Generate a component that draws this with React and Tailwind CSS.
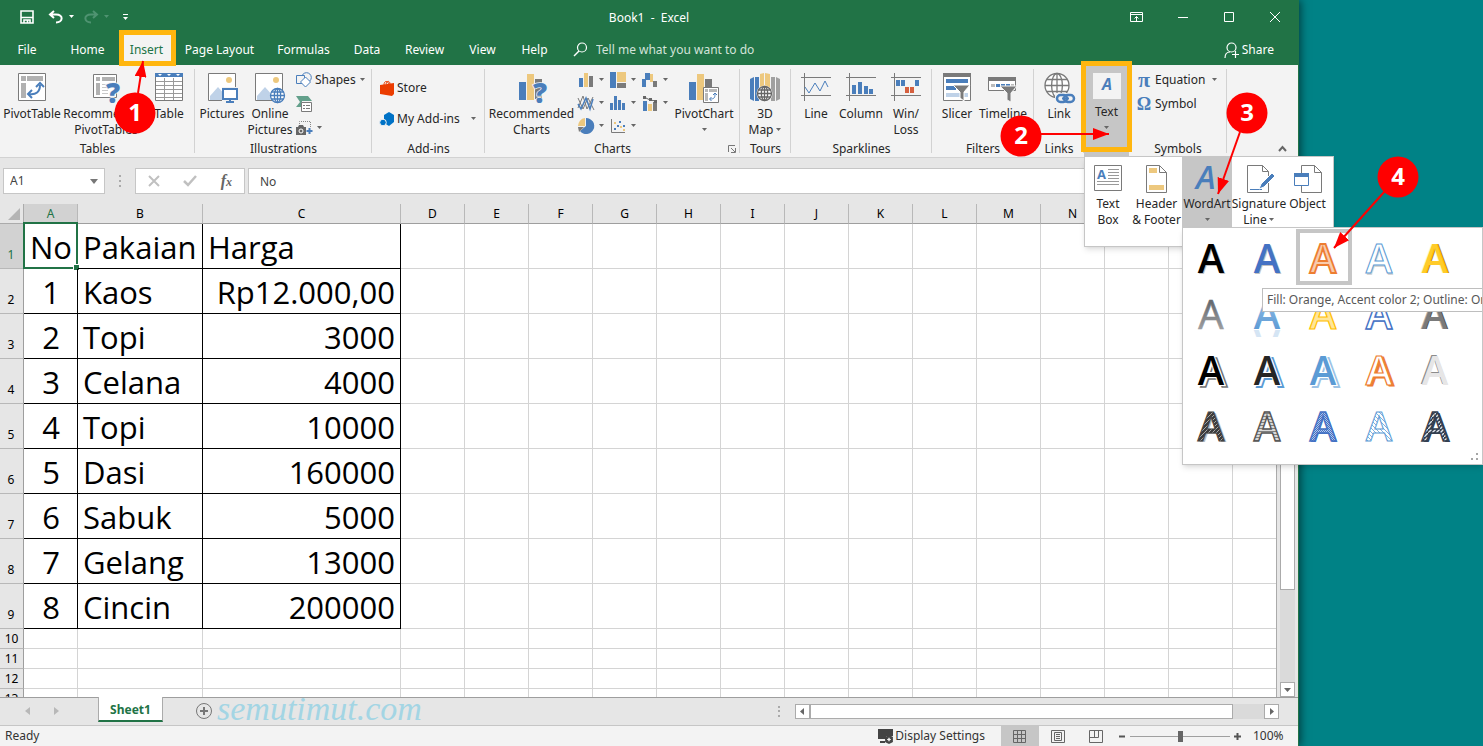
import React, { useState } from "react";

const BLUE = "#4a7ebb";
const TAN = "#edc87e";
const GRAY = "#7a7a7a";

const TABS = [
  { name: "File", width: "w-[54px]" },
  { name: "Home", width: "w-[67px]" },
  { name: "Insert", width: "w-[51px]" },
  { name: "Page Layout", width: "w-[95px]" },
  { name: "Formulas", width: "w-[73px]" },
  { name: "Data", width: "w-[54px]" },
  { name: "Review", width: "w-[61px]" },
  { name: "View", width: "w-[55px]" },
  { name: "Help", width: "w-[49px]" },
];

const ROWS = [
  ["No", "Pakaian", "Harga"],
  ["1", "Kaos", "Rp12.000,00"],
  ["2", "Topi", "3000"],
  ["3", "Celana", "4000"],
  ["4", "Topi", "10000"],
  ["5", "Dasi", "160000"],
  ["6", "Sabuk", "5000"],
  ["7", "Gelang", "13000"],
  ["8", "Cincin", "200000"],
];

const EMPTY_COLUMNS = ["D", "E", "F", "G", "H", "I", "J", "K", "L", "M", "N", "O", "P", "Q"];

function Svg({ w, h, children, className = "" }) {
  return (
    <svg width={w} height={h} viewBox={`0 0 ${w} ${h}`} fill="none" className={`shrink-0 overflow-visible ${className}`} aria-hidden="true">
      {children}
    </svg>
  );
}

function Caret({ className = "text-[#666]" }) {
  return (
    <Svg w={7} h={4} className={className}>
      <path d="M1 0h5L3.500 3z" fill="currentColor" />
    </Svg>
  );
}

/* ---------- ribbon icons ---------- */

function QuestionMark({ x, y }) {
  return (
    <text
      x={x}
      y={y}
      fontSize="28"
      fontWeight="800"
      fill={BLUE}
      stroke="#f3f3f3"
      strokeWidth="1.500"
      paintOrder="stroke"
      fontFamily="Open Sans, sans-serif"
    >
      ?
    </text>
  );
}

function PivotTableIcon() {
  return (
    <Svg w={28} h={28}>
      <path d="M.5.5h27v27H.5z" fill="#fff" stroke={GRAY} />
      <path d="M3 3h5v5H3zM9 3h16v5H9zM3 10h5v15H3z" fill="#b1b1b1" />
      <path d="M11 21c7 1 11-2 11-9" stroke={BLUE} strokeWidth="2" />
      <path d="M18 14l4-4 4 4M14 17l-4 4 4 4" stroke={BLUE} strokeWidth="2" />
    </Svg>
  );
}

function RecommendedPivotIcon() {
  return (
    <Svg w={26} h={32} className="-mb-1">
      <path d="M.5 1.500h23v23H.5z" fill="#fff" stroke={GRAY} />
      <path d="M3 4h4v4H3zM9 4h13v4H9zM3 10h4v12H3z" fill="#b1b1b1" />
      <path d="M9 11.500h9M9 14.500h6M9 17.500h6M9 20.500h6" stroke="#c8c8c8" />
      <QuestionMark x={13} y={30} />
    </Svg>
  );
}

function TableIcon() {
  return (
    <Svg w={28} h={28}>
      <path d="M.5.5h27v27H.5z" fill="#fff" stroke={GRAY} />
      <path d="M1 8.500h26M1 12.500h26M1 16.500h26M1 20.500h26M1 24.500h26M9.500 5v22M18.500 5v22" stroke="#9a9a9a" />
      <path d="M0 0h28v4H0z" fill={BLUE} />
      <path d="M3 1h4L5 3zM12 1h4l-2 2zM21 1h4l-2 2z" fill="#fff" />
    </Svg>
  );
}

function PhotoBase() {
  return (
    <>
      <path d="M.5.5h27v27H.5z" fill="#fff" stroke={GRAY} />
      <circle cx="21" cy="7" r="3" fill={TAN} />
      <path d="M2 27v-4l8-9 8 9v4z" fill="#bfd2e8" />
    </>
  );
}

function PicturesIcon() {
  return (
    <Svg w={28} h={30} className="-mb-[2px]">
      <PhotoBase />
      <path d="M14 14h17v15H14z" fill="#f3f3f3" />
      <path d="M15 16h14v10H15z" fill="#fff" stroke={BLUE} strokeWidth="2" />
      <path d="M21 27h2v2h-2zM18 28h8v2h-8z" fill={BLUE} />
    </Svg>
  );
}

function Globe({ cx, cy, r, color, bg = "#fff" }) {
  return (
    <g stroke={color} strokeWidth="1.300">
      <circle cx={cx} cy={cy} r={r} fill={bg} />
      <ellipse cx={cx} cy={cy} rx={r * 0.45} ry={r} />
      <path d={`M${cx - r} ${cy}h${r * 2}M${cx} ${cy - r}v${r * 2}M${cx - r * 0.87} ${cy - r / 2}h${r * 1.74}M${cx - r * 0.87} ${cy + r / 2}h${r * 1.74}`} />
    </g>
  );
}

function OnlinePicturesIcon() {
  return (
    <Svg w={30} h={30} className="-mb-[2px]">
      <PhotoBase />
      <Globe cx={22.5} cy={22.5} r={7} color={BLUE} />
    </Svg>
  );
}

function ShapesIcon() {
  return (
    <Svg w={16} h={16}>
      <circle cx="10.500" cy="5.500" r="4.800" stroke={BLUE} />
      <path d="M.5 3.500h8v8h-8z" fill="#f3f3f3" stroke={BLUE} />
      <path d="M9.500 5l5 5-5 5-5-5z" fill="#fff" stroke={BLUE} />
    </Svg>
  );
}

function SmartArtIcon() {
  return (
    <Svg w={16} h={16}>
      <path d="M0 0h12l4 5H6v6H0l4-5z" fill="#63a08b" />
      <path d="M5.500 6.500h10v9h-10z" fill="#fff" stroke={GRAY} />
      <path d="M7 9.500h2M10 9.500h4M7 12.500h2M10 12.500h4" stroke={GRAY} />
    </Svg>
  );
}

function ScreenshotIcon() {
  return (
    <Svg w={17} h={16}>
      <path d="M3.500 8V1.500h11V8" stroke="#888" strokeDasharray="1 1" />
      <path d="M0 7h2l1-2h4l1 2h2v8H0z" fill="#666" />
      <circle cx="5" cy="11" r="2" stroke="#fff" />
      <path d="M13.500 8v6M10.500 11h6" stroke={BLUE} strokeWidth="2" />
    </Svg>
  );
}

function StoreIcon() {
  return (
    <Svg w={14} h={16}>
      <path d="M0 5l14-2v11l-2 2-12-2z" fill="#eb3c00" />
      <path d="M4 5c0-5 4-4 5-1M6 4c1-4 4-3 4 0" stroke="#eb3c00" />
    </Svg>
  );
}

function AddinsIcon() {
  return (
    <Svg w={14} h={14}>
      <path d="M4 3l5-3 5 3v7l-5 4-5-3z" fill="#0072c6" />
      <circle cx="3" cy="10.500" r="3.300" fill="#0072c6" stroke="#f3f3f3" />
    </Svg>
  );
}

function RecommendedChartsIcon() {
  return (
    <Svg w={25} h={31} className="-mb-[3px]">
      <path d="M0 9h7v18H0z" fill={BLUE} />
      <path d="M8 1h7v26H8z" fill={TAN} />
      <path d="M16 6h7v20h-7z" fill={GRAY} />
      <QuestionMark x={14} y={30} />
    </Svg>
  );
}

function PivotChartIcon() {
  return (
    <Svg w={31} h={31} className="-mb-[3px]">
      <path d="M0 9h7v18H0z" fill={BLUE} />
      <path d="M8 1h7v26H8z" fill={TAN} />
      <path d="M16 6h7v9h-7z" fill={GRAY} />
      <path d="M14.500 14.500h15v15h-15z" fill="#fff" stroke={GRAY} />
      <path d="M16 16h3v3h-3zM20 16h8v3h-8zM16 20h3v8h-3z" fill="#b8b8b8" />
      <path d="M21 26c4 0 5-1 5-5M24 22l2-2 2 2M22.500 24l-2 2 2 2" stroke={BLUE} />
    </Svg>
  );
}

const CHART_ICONS = [
  {
    name: "Column chart",
    art: (
      <>
        <path d="M1 6h4v9H1z" fill={BLUE} />
        <path d="M6 1h4v14H6z" fill={TAN} />
        <path d="M11 4h4v11h-4z" fill={GRAY} />
      </>
    ),
  },
  {
    name: "Hierarchy chart",
    art: (
      <>
        <path d="M0 0h6v16H0z" fill={BLUE} />
        <path d="M7 0h9v10H7z" fill={TAN} />
        <path d="M7 11h9v5H7z" fill={GRAY} />
      </>
    ),
  },
  {
    name: "Waterfall chart",
    art: (
      <>
        <path d="M0 7h4v8H0z" fill={BLUE} />
        <path d="M3 1h5v7H3z" fill={BLUE} />
        <path d="M8 2h3v8H8z" fill={TAN} />
        <path d="M11 9h4v6h-4z" fill={GRAY} />
      </>
    ),
  },
  {
    name: "Line chart",
    art: (
      <>
        <path d="M0 13L5 1l4 13 6-12M0 3l5 11 5-11 6 12" stroke={GRAY} />
        <path d="M0 9l3 5 5-11 4 11 3-10" stroke={BLUE} strokeWidth="1.500" />
      </>
    ),
  },
  {
    name: "Statistic chart",
    art: <path d="M0 8h3v7H0zM4 1h3v14H4zM8 5h3v10H8zM12 8h3v7h-3z" fill={BLUE} />,
  },
  {
    name: "Combo chart",
    art: (
      <>
        <path d="M1 6h4v10H1z" fill={BLUE} />
        <path d="M6 9h4v7H6z" fill={TAN} />
        <path d="M11 7h4v9h-4z" fill={GRAY} />
        <path d="M2 2l6 3 6 1" stroke="#666" />
        <path d="M1 1h3v3H1zM7 3h3v3H7zM12 5h3v3h-3z" fill="#666" />
      </>
    ),
  },
  {
    name: "Pie chart",
    art: (
      <>
        <path d="M8 0v8L2 13A8 8 0 1 0 8 0z" fill={BLUE} />
        <path d="M7 0v8H0a8 8 0 0 1 7-8z" fill={TAN} />
        <path d="M0 9h6l-5 5z" fill={GRAY} />
      </>
    ),
  },
  {
    name: "Scatter chart",
    art: (
      <>
        <path d="M1.500 1v13.500H15" stroke={GRAY} />
        <path d="M4 10h2v2H4zM7 7h2v2H7zM9 3h2v2H9zM13 7h2v2h-2z" fill={BLUE} />
        <path d="M4 4h2v2H4zM10 8h2v2h-2zM13 11h2v2h-2z" fill={TAN} />
      </>
    ),
  },
];

function MapIcon() {
  return (
    <Svg w={30} h={28}>
      <path d="M0 6l4-2v24l-4-2zM5 4h4v24H5z" fill={BLUE} />
      <path d="M10 1l4-1v20h-4zM15 0l5 1v20h-5z" fill={TAN} />
      <path d="M21 4h4v24h-4zM26 4l4 2v20l-4 2z" fill="#a0a0a0" />
      <circle cx="14.500" cy="20.500" r="8" fill="#f3f3f3" />
      <Globe cx={14.5} cy={20.5} r={7} color="#666" />
    </Svg>
  );
}

function SparkIcon({ children }) {
  return (
    <Svg w={30} h={28}>
      <path d="M3.500 0v28M0 4.500h30M0 22.500h30" stroke={GRAY} />
      {children}
    </Svg>
  );
}

function SlicerIcon() {
  return (
    <Svg w={28} h={30} className="-mb-[2px]">
      <path d="M.5.5h27v27H.5z" fill="#fff" stroke={GRAY} />
      <path d="M0 0h28v4H0z" fill={GRAY} />
      <path d="M3 6h22v4H3zM3 13h10v4H3z" fill={BLUE} />
      <path d="M3 20h22v4H3z" fill="#bfd2e8" />
      <path d="M10 12h17l-6 7v9l-4-3v-6z" fill={GRAY} stroke="#fff" />
    </Svg>
  );
}

function TimelineIcon() {
  return (
    <Svg w={30} h={30} className="-mb-[2px]">
      <path d="M.5 4.500h27v13H.5z" fill="#fff" stroke={GRAY} />
      <path d="M0 4h28v4H0z" fill={GRAY} />
      <path d="M3 11h4v3H3zM23 11h3v3h-3z" fill="#bbb" />
      <path d="M8 11h4v3H8zM13 11h4v3h-4zM18 11h4v3h-4z" fill={BLUE} />
      <path d="M12 13h17l-6 7v9l-4-2v-7z" fill={GRAY} stroke="#f3f3f3" />
    </Svg>
  );
}

function LinkIcon() {
  return (
    <Svg w={30} h={31} className="-mb-[3px]">
      <Globe cx={13} cy={12.5} r={12} color={GRAY} />
      <path d="M11 20h21v11H11z" fill="#f3f3f3" />
      <rect x="13" y="22" width="10" height="7" rx="3.500" stroke={BLUE} strokeWidth="2.500" />
      <rect x="20" y="22" width="10" height="7" rx="3.500" stroke={BLUE} strokeWidth="2.500" />
      <path d="M18 25.500h7" stroke={BLUE} strokeWidth="2" />
    </Svg>
  );
}

/* ---------- ribbon parts ---------- */

function BigButton({ icon, lines, width, caret, caretInline, className = "" }) {
  return (
    <button type="button" className={`flex shrink-0 flex-col items-center pt-2 leading-4 whitespace-nowrap ${width} ${className}`}>
      {icon}
      <span className="mt-[5px] flex flex-col items-center">
        {lines.map((line, i) => (
          <span key={line} className="flex items-center gap-px">
            {line}
            {caretInline && i === lines.length - 1 && <Caret />}
          </span>
        ))}
      </span>
      {caret && <span className="flex h-4 items-center"><Caret /></span>}
    </button>
  );
}

function Group({ label, width, children, last, className = "" }) {
  return (
    <section className={`relative flex shrink-0 flex-col ${width} ${className}`}>
      <div className="flex h-[76px]">{children}</div>
      <h2 className="text-center leading-4">{label}</h2>
      {!last && <span className="absolute top-1 right-0 bottom-1 w-px bg-[#d2d2d2]" />}
    </section>
  );
}

function SmallButton({ icon, label, caret, className = "" }) {
  return (
    <button type="button" aria-label={label ? undefined : "Insert"} className={`flex h-6 items-center gap-[3px] whitespace-nowrap ${className}`}>
      {icon}
      {label}
      {caret && <Caret />}
    </button>
  );
}

function Ribbon() {
  return (
    <div className="relative flex h-[93px] shrink-0 overflow-hidden border-b border-[#d2d2d2] bg-[#f3f3f3] text-[#262626]">
      <Group label="Tables" width="w-[195px]">
        <BigButton icon={<PivotTableIcon />} lines={["PivotTable"]} width="w-16" />
        <BigButton icon={<RecommendedPivotIcon />} lines={["Recommended", "PivotTables"]} width="w-[84px]" />
        <BigButton icon={<TableIcon />} lines={["Table"]} width="w-[42px]" />
      </Group>
      <Group label="Illustrations" width="w-[177px]">
        <BigButton icon={<PicturesIcon />} lines={["Pictures"]} width="w-[54px]" />
        <BigButton icon={<OnlinePicturesIcon />} lines={["Online", "Pictures"]} width="w-[42px]" />
        <div className="flex flex-col pt-[3px] pl-[5px]">
          <SmallButton icon={<ShapesIcon />} label="Shapes" caret />
          <SmallButton icon={<SmartArtIcon />} />
          <SmallButton icon={<ScreenshotIcon />} caret />
        </div>
      </Group>
      <Group label="Add-ins" width="w-[113px]">
        <div className="flex w-full flex-col gap-[7px] px-2 pt-[11px]">
          <SmallButton icon={<StoreIcon />} label="Store" className="gap-1" />
          <div className="flex items-center justify-between">
            <SmallButton icon={<AddinsIcon />} label="My Add-ins" className="gap-1" />
            <Caret />
          </div>
        </div>
      </Group>
      <Group label="Charts" width="w-[255px]">
        <BigButton icon={<RecommendedChartsIcon />} lines={["Recommended", "Charts"]} width="w-[93px]" />
        <div className="grid auto-rows-[23px] grid-cols-3 gap-x-[5px] pt-[3px]">
          {CHART_ICONS.map((c) => (
            <button key={c.name} type="button" aria-label={c.name} className="flex h-[23px] items-center gap-[4px]">
              <Svg w={16} h={16}>{c.art}</Svg>
              <Caret />
            </button>
          ))}
        </div>
        <BigButton icon={<PivotChartIcon />} lines={["PivotChart"]} caret width="w-[70px]" />
        <button type="button" aria-label="Chart options" className="absolute right-1 bottom-1">
          <Svg w={8} h={8}>
            <path d="M.5 7V.5H7M3 3l4 4M7.500 3v4.500H3" stroke="#777" />
          </Svg>
        </button>
      </Group>
      <Group label="Tours" width="w-[51px]">
        <BigButton icon={<MapIcon />} lines={["3D", "Map"]} caretInline width="w-[50px]" />
      </Group>
      <Group label="Sparklines" width="w-[141px]">
        <BigButton
          icon={<SparkIcon><path d="M4 14l4 6 6-10 5 8 5-10 3 6" stroke={BLUE} /></SparkIcon>}
          lines={["Line"]}
          width="w-[50px]"
        />
        <BigButton
          icon={<SparkIcon><path d="M6 12h4v9H6zM12 9h4v12h-4zM18 13h4v8h-4zM23 16h4v5h-4z" fill={BLUE} /></SparkIcon>}
          lines={["Column"]}
          width="w-[40px]"
        />
        <BigButton
          icon={
            <SparkIcon>
              <path d="M5 7h4v6H5zM10 7h4v6h-4zM24 7h4v6h-4z" fill={BLUE} />
              <path d="M14 14h4v6h-4zM19 14h4v6h-4z" fill="#d6603f" />
            </SparkIcon>
          }
          lines={["Win/", "Loss"]}
          width="w-[50px]"
        />
      </Group>
      <Group label="Filters" width="w-[102px]">
        <BigButton icon={<SlicerIcon />} lines={["Slicer"]} width="w-[50px]" />
        <BigButton icon={<TimelineIcon />} lines={["Timeline"]} width="w-[42px]" />
      </Group>
      <Group label="Links" width="w-[50px]">
        <BigButton icon={<LinkIcon />} lines={["Link"]} width="w-[50px]" />
      </Group>
      <Group label="" width="w-[45px]" last className="bg-[#c6c6c6]">
        <BigButton
          icon={
            <Svg w={28} h={26} className="bg-[#f3f3f3]">
              <text x="9" y="17" fontSize="16" fontWeight="700" fontStyle="italic" fill={BLUE} fontFamily="Open Sans, sans-serif">A</text>
            </Svg>
          }
          lines={["Text"]}
          caret
          width="w-[45px]"
        />
      </Group>
      <Group label="Symbols" width="w-[98px]">
        <div className="flex w-full flex-col pt-[3px] pr-[9px] pl-[7px]">
          <div className="flex items-center justify-between">
            <SmallButton icon={<span className="w-4 font-['Liberation_Serif',serif] text-[22px] leading-5 font-bold text-[#4a7ebb]">π</span>} label="Equation" />
            <Caret />
          </div>
          <SmallButton icon={<span className="w-4 font-['Liberation_Serif',serif] text-[18px] leading-5 font-bold text-[#4a7ebb]">Ω</span>} label="Symbol" />
        </div>
      </Group>
      <button type="button" aria-label="Collapse the ribbon" className="absolute right-[11px] bottom-1">
        <Svg w={9} h={8}>
          <path d="M1 6l3.500-4L8 6" stroke="#666" strokeWidth="2" />
        </Svg>
      </button>
    </div>
  );
}

/* ---------- window chrome ---------- */

function TitleBar() {
  return (
    <header className="relative flex h-[34px] shrink-0 items-center bg-[#217346] pr-4 pl-5 text-white">
      <div className="flex items-center">
        <button type="button" aria-label="Save">
          <Svg w={14} h={14}>
            <path d="M1 1h12v12H1zM1 7.500h12M4 13v-3h6v3M7.500 10v3" stroke="#fff" strokeWidth="1.600" />
          </Svg>
        </button>
        <button type="button" aria-label="Undo" className="ml-[14px] flex items-center gap-1">
          <Svg w={16} h={14}>
            <path d="M6 1L2 4.500 6 8M2 4.500h6c8 0 7 8 0 8" stroke="#fff" strokeWidth="2" />
          </Svg>
          <Caret className="text-white" />
        </button>
        <button type="button" aria-label="Redo" disabled className="ml-2 flex items-center gap-1 text-[#4f9371]">
          <Svg w={16} h={14}>
            <path d="M10 1l4 3.500L10 8M14 4.500H8c-8 0-7 8 0 8" stroke="currentColor" strokeWidth="2" />
          </Svg>
          <Caret className="text-[#4f9371]" />
        </button>
        <button type="button" aria-label="Customize toolbar" className="ml-3">
          <Svg w={7} h={8}>
            <path d="M1 1.500h5" stroke="#fff" />
            <path d="M1 4h5L3.500 7z" fill="#fff" />
          </Svg>
        </button>
      </div>
      <h1 className="absolute inset-x-0 top-[10px] text-center leading-4 whitespace-pre">Book1  -  Excel</h1>
      <div className="relative ml-auto flex items-center">
        <button type="button" aria-label="Ribbon display options" className="mr-[35px]">
          <Svg w={13} h={10}>
            <path d="M.5.5h12v9H.5zM.5 2.500h12M6.500 9V4.500M4.500 6.500l2-2 2 2" stroke="#fff" />
          </Svg>
        </button>
        <button type="button" aria-label="Minimize" className="mr-9">
          <Svg w={10} h={10}><path d="M0 5.500h10" stroke="#fff" /></Svg>
        </button>
        <button type="button" aria-label="Maximize" className="mr-9">
          <Svg w={10} h={10}><path d="M.5.5h9v9h-9z" stroke="#fff" /></Svg>
        </button>
        <button type="button" aria-label="Close" className="mr-[2px]">
          <Svg w={10} h={10}><path d="M0 0l10 10M10 0L0 10" stroke="#fff" /></Svg>
        </button>
      </div>
    </header>
  );
}

function TabStrip({ active, onSelect }) {
  return (
    <nav className="flex h-[31px] shrink-0 items-stretch bg-[#217346] text-white">
      {TABS.map((tab) => (
        <button
          key={tab.name}
          type="button"
          onClick={() => onSelect(tab.name)}
          className={`shrink-0 whitespace-nowrap ${tab.width} ${active === tab.name ? "bg-[#f3f3f3] text-[#217346]" : ""}`}
        >
          {tab.name}
        </button>
      ))}
      <label className="ml-[14px] flex items-center gap-2 text-[#d3e3da]">
        <Svg w={15} h={15}>
          <circle cx="9" cy="5.500" r="4.500" stroke="#fff" strokeWidth="1.200" />
          <path d="M6 9l-5 5" stroke="#fff" strokeWidth="1.500" />
        </Svg>
        <input className="w-[170px] bg-transparent outline-none placeholder:text-[#d3e3da]" placeholder="Tell me what you want to do" />
      </label>
      <button type="button" className="mr-6 ml-auto flex items-center gap-[2px]">
        <Svg w={16} h={16}>
          <circle cx="7.500" cy="5.500" r="4.500" stroke="#fff" strokeWidth="1.200" />
          <path d="M1 16c0-4 2-6 5-6M8 12.500h7M11.500 9v7" stroke="#fff" strokeWidth="1.200" />
        </Svg>
        Share
      </button>
    </nav>
  );
}

function FormulaBar() {
  return (
    <div className="flex h-[46px] shrink-0 items-center bg-[#e6e6e6] pr-1 pl-[3px] text-[#444]">
      <div className="flex h-[26px] w-[102px] items-center border border-[#c6c6c6] bg-white px-[6px]">
        <input aria-label="Name box" defaultValue="A1" className="w-0 flex-1 bg-transparent outline-none" />
        <Svg w={8} h={5}><path d="M0 0h8L4 5z" fill="#777" /></Svg>
      </div>
      <Svg w={2} h={12} className="mx-[14px]">
        <path d="M0 0h2v2H0zM0 5h2v2H0zM0 10h2v2H0z" fill="#aaa" />
      </Svg>
      <div className="flex h-[26px] w-[110px] items-center justify-between border border-[#c6c6c6] bg-white px-3">
        <button type="button" aria-label="Cancel">
          <Svg w={12} h={12}><path d="M1 1l10 10M11 1L1 11" stroke="#c0c0c0" strokeWidth="2" /></Svg>
        </button>
        <button type="button" aria-label="Enter">
          <Svg w={14} h={12}><path d="M1 6l4 4 8-9" stroke="#c0c0c0" strokeWidth="2.500" /></Svg>
        </button>
        <button type="button" aria-label="Insert function" className="font-['Liberation_Serif',serif] text-base leading-4 font-bold text-[#666] italic">
          f<span className="text-xs">x</span>
        </button>
      </div>
      <input aria-label="Formula" defaultValue="No" className="ml-[3px] h-[26px] min-w-0 flex-1 border border-[#c6c6c6] bg-white px-[11px] outline-none" />
    </div>
  );
}

function Sheet() {
  return (
    <div className="min-w-0 flex-1 overflow-hidden border-r border-[#ababab] bg-white">
      <table className="w-full table-fixed border-separate border-spacing-0 text-black">
        <colgroup>
          <col className="w-6" />
          <col className="w-[54px]" />
          <col className="w-[125px]" />
          <col className="w-[198px]" />
          {EMPTY_COLUMNS.map((c) => (
            <col key={c} className="w-16" />
          ))}
        </colgroup>
        <thead>
          <tr className="h-5 bg-[#e6e6e6]">
            <th className="border-r border-b border-[#ababab] p-0">
              <Svg w={12} h={12} className="ml-2"><path d="M12 0v12H0z" fill="#b4b4b4" /></Svg>
            </th>
            {["A", "B", "C", ...EMPTY_COLUMNS].map((c) => (
              <th
                key={c}
                scope="col"
                className={`border-r border-b border-r-[#b8b8b8] border-b-[#9e9e9e] p-0 leading-4 font-normal ${c === "A" ? "bg-[#d2d2d2] text-[#217346]" : ""}`}
              >
                {c}
              </th>
            ))}
          </tr>
        </thead>
        <tbody>
          {ROWS.map((row, i) => (
            <tr key={i} className="h-[45px]">
              <th
                scope="row"
                className={`border-r border-b border-r-[#9e9e9e] border-b-[#b8b8b8] p-0 pr-px pb-[5px] align-bottom leading-4 font-normal ${i === 0 ? "bg-[#d2d2d2] text-[#217346]" : "bg-[#e6e6e6]"}`}
              >
                {i + 1}
              </th>
              {row.map((value, col) => (
                <td
                  key={col}
                  className={`relative border-r border-b border-black p-0 pt-[2px] font-['Open_Sans',sans-serif] text-[31px] leading-[42px] ${
                    col === 0 ? "pl-px text-center" : col === 2 && i > 0 ? "pr-[5px] text-right" : "pl-[5px] text-left"
                  }`}
                >
                  {value}
                  {i === 0 && col === 0 && (
                    <span className="absolute -inset-x-px -top-[2px] -bottom-px border-2 border-[#217346]">
                      <span className="absolute -right-[3px] -bottom-[3px] h-[6px] w-[6px] border-t border-l border-white bg-[#217346]" />
                    </span>
                  )}
                </td>
              ))}
              {EMPTY_COLUMNS.map((c) => (
                <td key={c} className="border-r border-b border-[#d4d4d4] p-0" />
              ))}
            </tr>
          ))}
          {[10, 11, 12, 13].map((n) => (
            <tr key={n} className="h-5">
              <th scope="row" className="border-r border-b border-r-[#9e9e9e] border-b-[#b8b8b8] bg-[#e6e6e6] p-0 leading-4 font-normal">{n}</th>
              {["A", "B", "C", ...EMPTY_COLUMNS].map((c) => (
                <td key={c} className="border-r border-b border-[#d4d4d4] p-0" />
              ))}
            </tr>
          ))}
        </tbody>
      </table>
    </div>
  );
}

function ScrollButton({ label, d }) {
  return (
    <button type="button" aria-label={label} className="flex h-[15px] w-[15px] shrink-0 items-center justify-center border border-[#ababab] bg-white">
      <Svg w={7} h={7}><path d={d} fill="#666" /></Svg>
    </button>
  );
}

function SheetTabs() {
  return (
    <div className="flex h-[28px] shrink-0 items-start border-t border-[#9e9e9e] bg-[#e6e6e6] pr-[19px]">
      <div className="flex h-[26px] w-[98px] items-center gap-6 pl-[25px]">
        <Svg w={5} h={8}><path d="M5 0v8L0 4z" fill="#b8b8b8" /></Svg>
        <Svg w={5} h={8}><path d="M0 0v8l5-4z" fill="#b8b8b8" /></Svg>
      </div>
      <button type="button" className="-mt-px h-[25px] w-[65px] border-x border-b-2 border-x-[#ababab] border-b-[#217346] bg-white pt-[2px] font-bold text-[#217346]">
        Sheet1
      </button>
      <button type="button" aria-label="New sheet" className="mt-1 ml-8">
        <Svg w={18} h={18}>
          <circle cx="9" cy="9" r="7.500" stroke="#777" />
          <path d="M9 5v8M5 9h8" stroke="#777" strokeWidth="2" />
        </Svg>
      </button>
      <span className="-mt-1 ml-1 font-['Liberation_Serif',serif] text-[34px] leading-[30px] text-[#a3d5e4] italic">semutimut.com</span>
      <div className="mt-[6px] ml-auto flex items-center">
        <Svg w={2} h={11} className="mr-[15px]">
          <path d="M0 0h2v2H0zM0 4h2v2H0zM0 9h2v2H0z" fill="#aaa" />
        </Svg>
        <ScrollButton label="Scroll left" d="M5 0v7L1 3.500z" />
        <div className="flex h-[15px] w-[454px] bg-[#dadada]">
          <div className="w-[423px] border border-[#ababab] bg-white" />
        </div>
        <ScrollButton label="Scroll right" d="M2 0v7l4-3.500z" />
      </div>
    </div>
  );
}

function StatusBar() {
  return (
    <footer className="flex h-[21px] shrink-0 items-center border-t border-[#c6c6c6] bg-[#f3f3f3] pl-[5px] text-[#333]">
      <span>Ready</span>
      <button type="button" className="mr-4 ml-auto flex items-center gap-px">
        <Svg w={16} h={15}>
          <path d="M0 0h15v7H8v3H0zM2 12h5v2H2z" fill="#444" />
          <circle cx="11" cy="10.500" r="3" stroke="#444" strokeWidth="2" />
          <path d="M11 6v9M7 8l8 5M15 8l-8 5" stroke="#444" />
          <circle cx="11" cy="10.500" r="1.200" fill="#f3f3f3" />
        </Svg>
        Display Settings
      </button>
      <button type="button" aria-label="Normal view" className="flex h-full w-[38px] items-center justify-center bg-[#c6c6c6]">
        <Svg w={14} h={13}><path d="M.5.5h12v12H.5zM.5 4.500h12M.5 8.500h12M4.500.5v12M8.500.5v12" stroke="#666" /></Svg>
      </button>
      <button type="button" aria-label="Page layout view" className="ml-3">
        <Svg w={14} h={13}><path d="M.5.5h13v12H.5zM3.500 2.500h7v8h-7zM5 4.500h4M5 6.500h4M5 8.500h4" stroke="#666" /></Svg>
      </button>
      <button type="button" aria-label="Page break view" className="ml-6">
        <Svg w={14} h={13}><path d="M.5.5h13v12H.5zM5.500.5v7M9.500.5v7M.5 7.500h9" stroke="#666" /></Svg>
      </button>
      <button type="button" aria-label="Zoom out" className="ml-4">
        <Svg w={7} h={7}><path d="M0 3.500h6" stroke="#555" strokeWidth="2" /></Svg>
      </button>
      <input
        type="range"
        aria-label="Zoom"
        defaultValue="50"
        className="mx-1 h-3 w-[100px] appearance-none bg-transparent [&::-webkit-slider-runnable-track]:h-px [&::-webkit-slider-runnable-track]:bg-[#a0a0a0] [&::-webkit-slider-thumb]:-mt-[5px] [&::-webkit-slider-thumb]:h-[11px] [&::-webkit-slider-thumb]:w-[5px] [&::-webkit-slider-thumb]:appearance-none [&::-webkit-slider-thumb]:bg-[#666]"
      />
      <button type="button" aria-label="Zoom in">
        <Svg w={7} h={7}><path d="M0 3.500h7M3.500 0v7" stroke="#555" strokeWidth="2" /></Svg>
      </button>
      <span className="mr-4 ml-3 w-[29px]">100%</span>
    </footer>
  );
}

/* ---------- drop-down panels ---------- */

function TextMenu() {
  return (
    <div className="absolute top-[156px] left-[1084px] flex h-[91px] w-[250px] border border-[#c6c6c6] bg-white text-[#262626] shadow-md">
      <BigButton
        icon={
          <Svg w={28} h={26}>
            <path d="M.5.5h27v25H.5z" fill="#fff" stroke={GRAY} />
            <text x="3" y="14" fontSize="13" fontWeight="700" fill={BLUE} fontFamily="Open Sans, sans-serif">A</text>
            <path d="M14 4.500h11M14 7.500h11M14 10.500h11M14 13.500h11M3 16.500h22M3 19.500h22" stroke="#999" />
          </Svg>
        }
        lines={["Text", "Box"]}
        width="w-[46px]"
      />
      <BigButton
        icon={
          <Svg w={21} h={28} className="-mb-[2px]">
            <path d="M.5.5h13l7 7v20H.5z" fill="#fff" stroke={GRAY} />
            <path d="M3 3h8v5H3zM3 20h15v5H3z" fill={TAN} />
            <path d="M13.500.5v7h7" stroke={GRAY} />
          </Svg>
        }
        lines={["Header", "& Footer"]}
        width="w-[51px]"
      />
      <BigButton
        icon={
          <Svg w={28} h={26}>
            <text x="3" y="24" fontSize="33" fontWeight="600" fontStyle="italic" fill={BLUE} fontFamily="Open Sans, sans-serif">A</text>
          </Svg>
        }
        lines={["WordArt"]}
        caret
        width="w-[50px]"
        className="bg-[#c6c6c6]"
      />
      <BigButton
        icon={
          <Svg w={24} h={28} className="-mb-[2px]">
            <path d="M.5.5h15l6 6v21H.5z" fill="#fff" stroke={GRAY} />
            <path d="M15.500.5v6h6" stroke={GRAY} />
            <path d="M3 24.500h12" stroke={BLUE} />
            <path d="M12 24l2-5L25 8l3 3-11 11z" fill={BLUE} stroke="#fff" />
          </Svg>
        }
        lines={["Signature", "Line"]}
        caretInline
        width="w-[54px]"
      />
      <BigButton
        icon={
          <Svg w={28} h={28} className="-mb-[2px]">
            <path d="M7.500.5h13l7 7v20h-20z" fill="#fff" stroke={GRAY} />
            <path d="M20.500.5v7h7" stroke={GRAY} />
            <path d="M.5 8.500h14v12H.5z" fill="#fff" stroke={BLUE} />
            <path d="M0 8h15v4H0z" fill={BLUE} />
          </Svg>
        }
        lines={["Object"]}
        width="w-[43px]"
      />
    </div>
  );
}

// Each entry is a stack of letters, painted back to front.
const WORDART = [
  [{ fill: "#999", dx: 1, dy: 1, opacity: 0.6 }, { fill: "#000" }],
  [{ fill: "#999", dx: 1, dy: 1, opacity: 0.6 }, { fill: "#4472c4" }],
  [{ fill: "#f8cbad", stroke: "#ed7d31", sw: 1.8 }],
  [{ fill: "#bbb", dx: 1, dy: 2, opacity: 0.6 }, { fill: "#fff", stroke: "#5b9bd5", sw: 1 }],
  [{ fill: "#a88400", dx: 1, dy: 0 }, { fill: "#ffc000" }, { fill: "#ffe27a", dx: -1, dy: 0, opacity: 0.35 }],
  [{ fill: "url(#fadeGray)", weight: 400, stroke: "url(#fadeGray)", sw: 0.6 }],
  [{ fill: "#5b9bd5", mirror: true, opacity: 0.25 }, { fill: "url(#fadeBlue)" }],
  [{ fill: "#ffe699", stroke: "#ffc000", sw: 1.2 }],
  [{ fill: "#aac0e8", dx: 1, dy: 1 }, { fill: "#fff", stroke: "#4472c4", sw: 1.4 }],
  [{ fill: "#555" }, { fill: "#8a8a8a", dx: -1, dy: 0, opacity: 0.7 }],
  [{ fill: "#fff", stroke: "#777", sw: 1.6, dx: 3, dy: 2 }, { fill: "#000", stroke: "#fff", sw: 2, behind: true }],
  [{ fill: "#fff", stroke: "#5b9bd5", sw: 1.8, dx: 3, dy: 2 }, { fill: "#262626", stroke: "#fff", sw: 2, behind: true }],
  [{ fill: "#fff", stroke: "#9dc3e6", sw: 1.8, dx: 3, dy: 2 }, { fill: "#5b9bd5", stroke: "#fff", sw: 2, behind: true }],
  [{ fill: "#ed7d31", stroke: "#ed7d31", sw: 1, dx: 2, dy: 1 }, { fill: "#fff", stroke: "#ed7d31", sw: 1.2 }],
  [{ fill: "#8c8c8c", dx: -1, dy: -1 }, { fill: "#e7e6e6" }],
  [{ fill: "#bbb", dx: 2, dy: 1 }, { fill: "url(#darkStripes)", stroke: "#444", sw: 1.2 }],
  [{ fill: "url(#grayLines)", stroke: "#555", sw: 1.4 }],
  [{ fill: "#4472c4", dx: 1, dy: 1 }, { fill: "url(#blueDots)", stroke: "#4472c4", sw: 1.4 }],
  [{ fill: "url(#lightStripes)", stroke: "#5b9bd5", sw: 1 }],
  [{ fill: "#333f50", dx: 2, dy: 1 }, { fill: "url(#navyStripes)", stroke: "#333f50", sw: 1.4 }],
];

function WordArtDefs() {
  return (
    <svg width="0" height="0" className="absolute" aria-hidden="true">
      <defs>
        <linearGradient id="fadeGray" x1="0" y1="0" x2="0" y2="1">
          <stop offset="0.300" stopColor="#666a70" />
          <stop offset="1" stopColor="#b5b5b5" />
        </linearGradient>
        <linearGradient id="fadeBlue" x1="0" y1="0" x2="0" y2="1">
          <stop offset="0.300" stopColor="#8bb8e2" />
          <stop offset="1" stopColor="#4a8fd0" />
        </linearGradient>
        <pattern id="darkStripes" width="4" height="4" patternUnits="userSpaceOnUse">
          <path d="M0 0h4v4H0z" fill="#3c3c3c" />
          <path d="M-1 5L5-1" stroke="#a8a8a8" />
        </pattern>
        <pattern id="grayLines" width="4" height="3" patternUnits="userSpaceOnUse">
          <path d="M0 0h4v3H0z" fill="#d9d9d9" />
          <path d="M0 .5h4" stroke="#7f7f7f" />
        </pattern>
        <pattern id="blueDots" width="2" height="2" patternUnits="userSpaceOnUse">
          <path d="M0 0h2v2H0z" fill="#4472c4" />
          <path d="M0 0h1v1H0zM1 1h1v1H1z" fill="#b4c7ea" />
        </pattern>
        <pattern id="lightStripes" width="4" height="4" patternUnits="userSpaceOnUse">
          <path d="M0 0h4v4H0z" fill="#fff" />
          <path d="M-1-1l6 6" stroke="#7fb2e0" />
        </pattern>
        <pattern id="navyStripes" width="4" height="4" patternUnits="userSpaceOnUse">
          <path d="M0 0h4v4H0z" fill="#333f50" />
          <path d="M-1 5L5-1" stroke="#dfe5ee" strokeWidth="1.400" />
        </pattern>
      </defs>
    </svg>
  );
}

function WordArtLetter({ layers }) {
  return (
    <svg width="48" height="48" viewBox="0 0 48 48" aria-hidden="true">
      {layers.map((l, i) => (
        <text
          key={i}
          x={23 + (l.dx || 0)}
          y={40 + (l.dy || 0)}
          textAnchor="middle"
          fontFamily="Open Sans, sans-serif"
          fontSize="40"
          fontWeight={l.weight || 600}
          fill={l.fill}
          stroke={l.stroke}
          strokeWidth={l.sw}
          opacity={l.opacity}
          paintOrder={l.behind ? "stroke" : undefined}
          transform={l.mirror ? "translate(0 81) scale(1 -1)" : undefined}
        >
          A
        </text>
      ))}
    </svg>
  );
}

function WordArtGallery() {
  const [selected, setSelected] = useState(2);
  return (
    <div className="absolute top-[227px] left-[1182px] h-[238px] w-[301px] border border-[#c6c6c6] bg-white pt-px pl-px shadow-md">
      <WordArtDefs />
      <div className="grid w-[280px] grid-cols-5">
        {WORDART.map((layers, i) => (
          <button
            key={i}
            type="button"
            aria-label={`WordArt style ${i + 1}`}
            onClick={() => setSelected(i)}
            className={`flex h-14 w-14 items-center justify-center border-4 ${selected === i ? "border-[#c6c6c6]" : "border-transparent"}`}
          >
            <WordArtLetter layers={layers} />
          </button>
        ))}
      </div>
      <Svg w={7} h={7} className="absolute right-1 bottom-1">
        <path d="M5 0h2v2H5zM5 5h2v2H5zM0 5h2v2H0z" fill="#a6a6a6" />
      </Svg>
      <div role="tooltip" className="absolute top-[60px] right-0 left-[79px] h-6 overflow-hidden border border-r-0 border-[#bebebe] bg-white pl-1 leading-[22px] whitespace-nowrap text-[#575757]">
        Fill: Orange, Accent color 2; Outline: Orange
      </div>
    </div>
  );
}

const STEPS = [
  { n: 1, x: 135, y: 113, from: [138, 93], to: [143, 61] },
  { n: 2, x: 1021, y: 136, from: [1041, 134], to: [1109, 134] },
  { n: 3, x: 1247, y: 113, from: [1240, 132], to: [1218, 194] },
  { n: 4, x: 1398, y: 177, from: [1385, 191], to: [1334, 248] },
];

function Callouts() {
  return (
    <svg width="1483" height="746" className="pointer-events-none absolute top-0 left-0" aria-hidden="true">
      <defs>
        <marker id="tip" markerWidth="16" markerHeight="12" refX="16" refY="6" orient="auto" markerUnits="userSpaceOnUse">
          <path d="M0 0l16 6-16 6z" fill="#f00" />
        </marker>
      </defs>
      <g fill="none" stroke="#ffb60f" strokeWidth="5">
        <rect x="121.500" y="32.500" width="52" height="31" />
        <rect x="1083.500" y="63.500" width="46" height="86" />
      </g>
      {STEPS.map((s) => (
        <g key={s.n}>
          <path d={`M${s.from[0]} ${s.from[1]}L${s.to[0]} ${s.to[1]}`} stroke="#f00" strokeWidth="2" markerEnd="url(#tip)" />
          <circle cx={s.x} cy={s.y} r="20.500" fill="#f00" />
          <text x={s.x} y={s.y + 8} textAnchor="middle" fontSize="24" fontWeight="700" fill="#fff" fontFamily="Noto Sans, sans-serif">
            {s.n}
          </text>
        </g>
      ))}
    </svg>
  );
}

export default function App() {
  const [tab, setTab] = useState("Insert");

  return (
    <div className="relative h-screen overflow-hidden bg-[#008286] font-['Noto_Sans',sans-serif] text-xs">
      <div className="mr-[184px] flex h-full flex-col border-r border-[#217346] shadow-[2px_0_8px_rgba(0,0,0,0.5)]">
        <TitleBar />
        <TabStrip active={tab} onSelect={setTab} />
        <Ribbon />
        <FormulaBar />
        <div className="flex min-h-0 flex-1 bg-[#e6e6e6]">
          <Sheet />
          <div className="flex w-[21px] flex-col items-center pr-px">
            <ScrollButton label="Scroll up" d="M0 5h7L3.500 1z" />
            <div className="flex w-[15px] flex-1 flex-col bg-[#dadada]">
              <div className="h-[371px] border border-[#ababab] bg-white" />
            </div>
            <ScrollButton label="Scroll down" d="M0 2h7L3.500 6z" />
          </div>
        </div>
        <SheetTabs />
        <StatusBar />
      </div>
      <TextMenu />
      <WordArtGallery />
      <Callouts />
    </div>
  );
}
